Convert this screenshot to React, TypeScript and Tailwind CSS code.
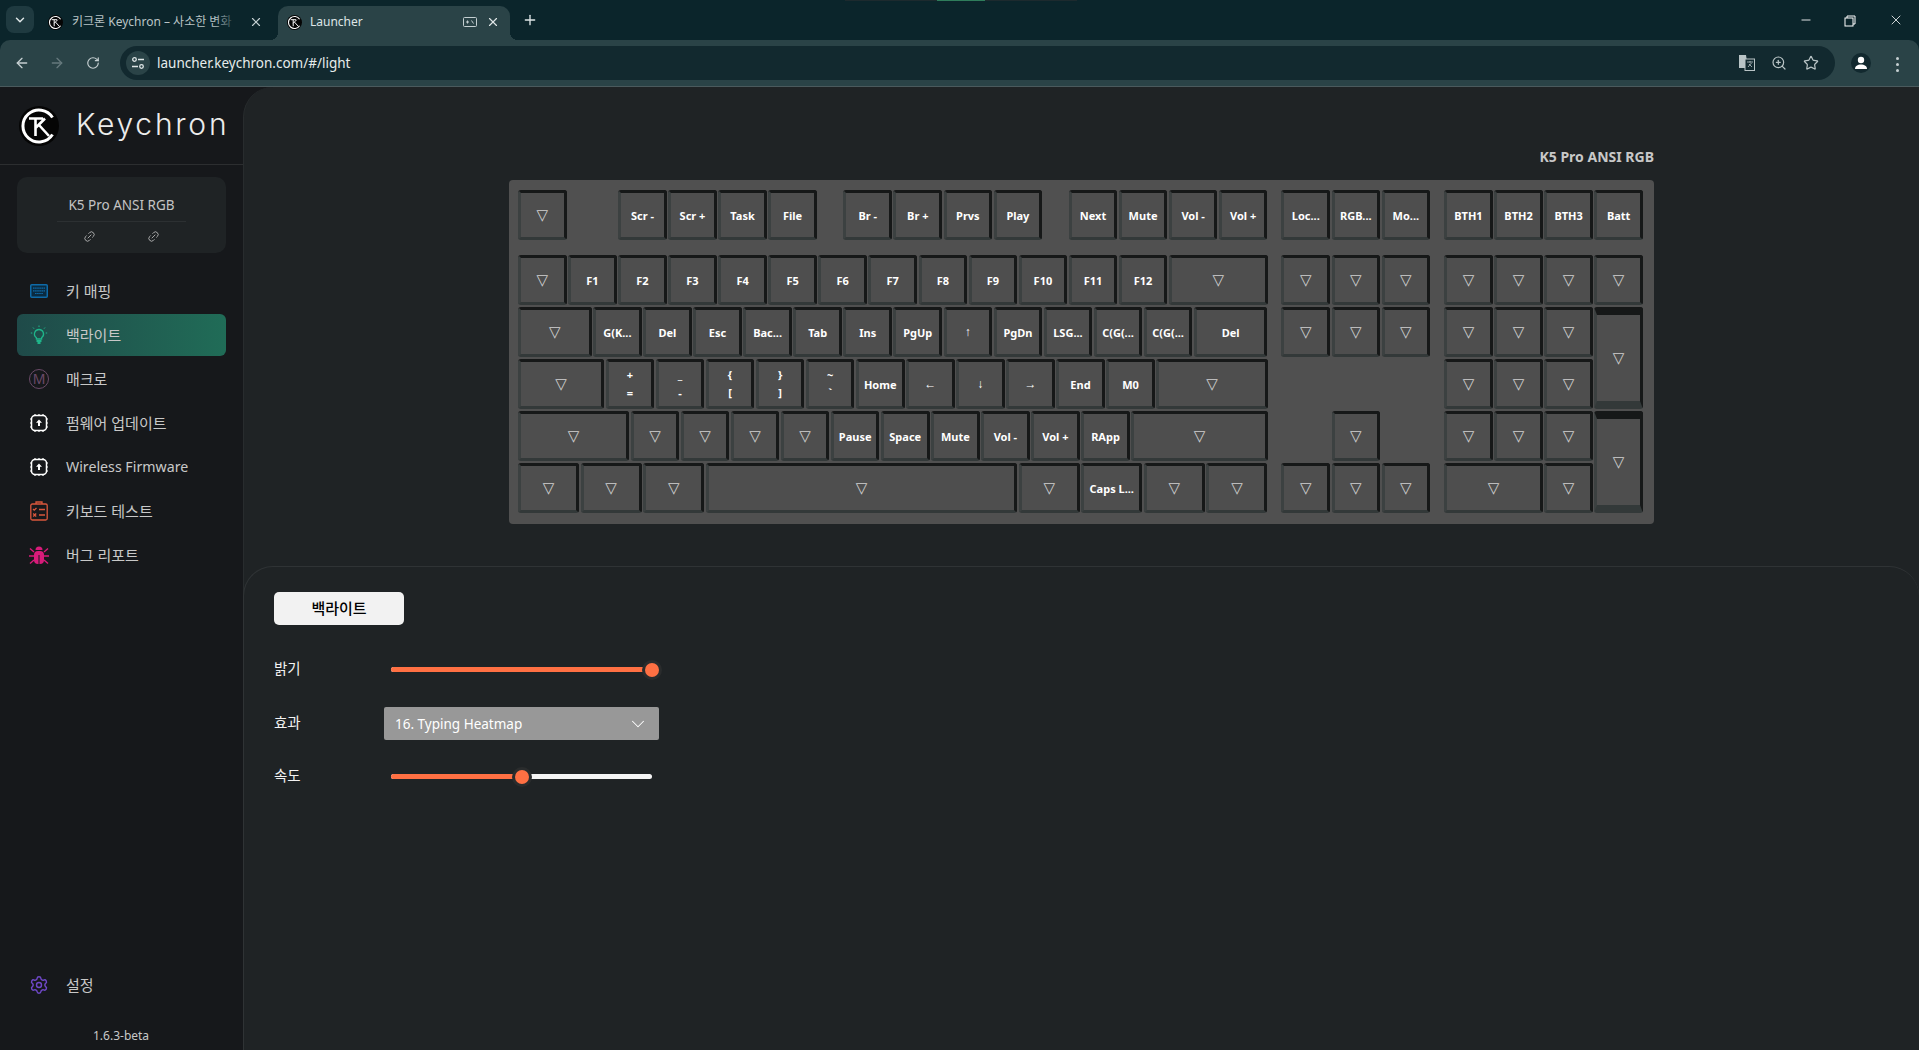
import { ArrowLeft, ArrowRight, ChevronDown, Link2, Minus, Plus, RotateCw, Settings, Star, X, ZoomIn } from 'lucide-react';

const UNIT = 50.1;
const FONT = { fontFamily: '"Noto Sans", "Noto Sans CJK KR", sans-serif' };

type KeyDef = { l?: string; l2?: string; x: number; w?: number; h?: number; r: number };

const tri = '▽';
const arrows = ['←', '↑', '→', '↓'];

function row(r: number, start: number, labels: string[]): KeyDef[] {
  return labels.map((l, i) => ({ l, x: start + i, r }));
}

const keys: KeyDef[] = [
  // function row
  { l: tri, x: 0, r: 1 },
  ...row(1, 2, ['Scr -', 'Scr +', 'Task', 'File']),
  ...row(1, 6.5, ['Br -', 'Br +', 'Prvs', 'Play']),
  ...row(1, 11, ['Next', 'Mute', 'Vol -', 'Vol +']),
  ...row(1, 15.25, ['Loc...', 'RGB...', 'Mo...']),
  ...row(1, 18.5, ['BTH1', 'BTH2', 'BTH3', 'Batt']),
  // number row
  ...row(2, 0, [tri, 'F1', 'F2', 'F3', 'F4', 'F5', 'F6', 'F7', 'F8', 'F9', 'F10', 'F11', 'F12']),
  { l: tri, x: 13, w: 2, r: 2 },
  ...row(2, 15.25, [tri, tri, tri]),
  ...row(2, 18.5, [tri, tri, tri, tri]),
  // tab row
  { l: tri, x: 0, w: 1.5, r: 3 },
  ...row(3, 1.5, ['G(K...', 'Del', 'Esc', 'Bac...', 'Tab', 'Ins', 'PgUp', '↑', 'PgDn', 'LSG...', 'C(G(...', 'C(G(...']),
  { l: 'Del', x: 13.5, w: 1.5, r: 3 },
  ...row(3, 15.25, [tri, tri, tri]),
  ...row(3, 18.5, [tri, tri, tri]),
  { l: tri, x: 21.5, h: 2, r: 3 },
  // caps row
  { l: tri, x: 0, w: 1.75, r: 4 },
  { l: '+', l2: '=', x: 1.75, r: 4 },
  { l: '_', l2: '-', x: 2.75, r: 4 },
  { l: '{', l2: '[', x: 3.75, r: 4 },
  { l: '}', l2: ']', x: 4.75, r: 4 },
  { l: '~', l2: '`', x: 5.75, r: 4 },
  ...row(4, 6.75, ['Home', '←', '↓', '→', 'End', 'M0']),
  { l: tri, x: 12.75, w: 2.25, r: 4 },
  ...row(4, 18.5, [tri, tri, tri]),
  // shift row
  { l: tri, x: 0, w: 2.25, r: 5 },
  ...row(5, 2.25, [tri, tri, tri, tri, 'Pause', 'Space', 'Mute', 'Vol -', 'Vol +', 'RApp']),
  { l: tri, x: 12.25, w: 2.75, r: 5 },
  { l: tri, x: 16.25, r: 5 },
  ...row(5, 18.5, [tri, tri, tri]),
  { l: tri, x: 21.5, h: 2, r: 5 },
  // bottom row
  { l: tri, x: 0, w: 1.25, r: 6 },
  { l: tri, x: 1.25, w: 1.25, r: 6 },
  { l: tri, x: 2.5, w: 1.25, r: 6 },
  { l: tri, x: 3.75, w: 6.25, r: 6 },
  { l: tri, x: 10, w: 1.25, r: 6 },
  { l: 'Caps L...', x: 11.25, w: 1.25, r: 6 },
  { l: tri, x: 12.5, w: 1.25, r: 6 },
  { l: tri, x: 13.75, w: 1.25, r: 6 },
  ...row(6, 15.25, [tri, tri, tri]),
  { l: tri, x: 18.5, w: 2, r: 6 },
  { l: tri, x: 20.5, r: 6 },
];

function Logo({ size }: { size: number }) {
  return (
    <svg width={size} height={size} viewBox="0 0 40 40" className="shrink-0">
      <circle cx="20" cy="20" r="20" fill="#050505" />
      <path d="M33.5 11.5A16 16 0 1 0 33.5 28.5" fill="none" stroke="#fff" strokeWidth="3" />
      <path d="M10 12.5H24M16.5 12.5V30M16.5 22L26 12.5M20 19L30 30" fill="none" stroke="#fff" strokeWidth="2.6" />
    </svg>
  );
}

function Key({ def }: { def: KeyDef }) {
  const w = def.w ?? 1;
  const tall = def.h === 2;
  const isTri = def.l === tri;
  const isArrow = arrows.includes(def.l ?? '');
  return (
    <div
      className={`flex flex-col items-center justify-center rounded-[3px] border-l-[3px] border-r-[3px] border-l-[#3c4141] border-r-[#161818] bg-[#4e4e4e] text-white ${
        tall
          ? 'h-[102px] border-t-[8px] border-b-[8px] border-t-[#161818] border-b-[#333939]'
          : 'h-[50px] border-t-[3px] border-b-[3px] border-t-[#161818] border-b-[#333939]'
      }`}
      style={{
        gridColumn: `${Math.round(def.x * 4) + 1} / span ${Math.round(w * 4)}`,
        gridRow: `${def.r} / span ${def.h ?? 1}`,
        width: w * UNIT - 1.5,
      }}
    >
      {isTri ? (
        <span className="text-[15px] leading-none text-[#d0d0d0] font-['DejaVu_Sans']">{tri}</span>
      ) : def.l2 ? (
        <>
          <span className="text-[11px] font-bold leading-[18px]">{def.l}</span>
          <span className="text-[11px] font-bold leading-[18px]">{def.l2}</span>
        </>
      ) : (
        <span className={`whitespace-nowrap font-bold leading-none ${isArrow ? "font-['Liberation_Sans'] text-[12px]" : 'text-[11px]'}`}>
          {def.l}
        </span>
      )}
    </div>
  );
}

function Keyboard() {
  return (
    <div className="w-[1145px] rounded-[4px] bg-[#505050] pl-[9px] pt-[10px] pb-[11px]">
      <div
        className="grid grid-rows-[65px_52px_52px_52px_52px_50px]"
        style={{ gridTemplateColumns: `repeat(90, ${UNIT / 4}px)` }}
      >
        {keys.map((k, i) => (
          <Key key={i} def={k} />
        ))}
      </div>
    </div>
  );
}

function ChipIcon() {
  return (
    <svg width="20" height="20" viewBox="0 0 20 20" fill="none" className="text-white">
      <rect x="2.5" y="2.5" width="15" height="15" rx="3.5" stroke="currentColor" strokeWidth="1.5" />
      <path
        d="M6 1v1M10 1v1M14 1v1M6 18v1M10 18v1M14 18v1M1 6h1M1 10h1M1 14h1M18 6h1M18 10h1M18 14h1"
        stroke="currentColor"
        strokeWidth="1.2"
      />
      <path d="M10 6.5l3 3.2h-2v3.3H9V9.700H7z" fill="currentColor" />
    </svg>
  );
}

const navItems = [
  {
    label: '키 매핑',
    icon: (
      <svg width="18" height="14" viewBox="0 0 18 14" fill="none" stroke="#0e6aa8">
        <rect x="0.75" y="0.75" width="16.5" height="12.5" rx="1" strokeWidth="1.500" fill="#0a2a40" />
        <path d="M3 4.200h12M3 6.800h12M5 9.500h8" strokeWidth="1.200" strokeDasharray="1.600 .5" />
      </svg>
    ),
  },
  {
    label: '백라이트',
    active: true,
    icon: (
      <svg width="18" height="20" viewBox="0 0 18 20" fill="none" stroke="#1fb58a" strokeWidth="1.300">
        <path d="M9 4.500a4.500 4.500 0 0 0-2.600 8.200V14h5.200v-1.300A4.500 4.500 0 0 0 9 4.500z" />
        <path d="M6.500 16h5M7.500 18h3" strokeWidth="1.800" />
        <path d="M9 .5v1.500M3 2.500l1 1.200M15 2.500l-1 1.200M.8 8h1.500M15.700 8h1.500" strokeWidth="1" />
      </svg>
    ),
  },
  {
    label: '매크로',
    icon: (
      <span className="flex h-5 w-5 items-center justify-center rounded-full border border-[#6a4a68] text-[14px] leading-none text-[#6a4a68]">
        M
      </span>
    ),
  },
  { label: '펌웨어 업데이트', icon: <ChipIcon /> },
  { label: 'Wireless Firmware', latin: true, icon: <ChipIcon /> },
  {
    label: '키보드 테스트',
    icon: (
      <svg width="18" height="20" viewBox="0 0 18 20" fill="none" stroke="#d9573d" strokeWidth="1.300">
        <rect x="0.8" y="3" width="16.400" height="16" rx="1.500" />
        <path d="M6 3V1h6v2" />
        <path d="M3 8l1.200 1.200L6.500 7M3.200 12.500l3 3M6.200 12.500l-3 3M9 8.500h6M9 14h6" />
      </svg>
    ),
  },
  {
    label: '버그 리포트',
    icon: (
      <svg width="20" height="20" viewBox="0 0 20 20" fill="#d81b7a">
        <path d="M6.500 5a3.500 3.500 0 0 1 7 0z" />
        <rect x="5" y="6" width="10" height="13" rx="4" />
        <path d="M1 3.500l4 3.500M19 3.500l-4 3.500M0 11h5M20 11h-5M1 18.500l4-3.500M19 18.500l-4-3.500" stroke="#d81b7a" strokeWidth="1.400" />
        <path d="M10 10v9" stroke="#16181b" strokeWidth="1" />
      </svg>
    ),
  },
];

function Sidebar() {
  return (
    <aside className="flex h-full w-[243px] shrink-0 flex-col bg-[#16181b]">
      <div className="flex h-[78px] items-center gap-[17px] border-b border-[#2c2e30] pl-[19px]">
        <Logo size={40} />
        <span className="font-['Inter'] text-[30px] font-light leading-none tracking-[2.750px] text-[#ececec] -mt-[4px]">
          Keychron
        </span>
      </div>
      <div className="mx-[17px] mt-[12px] flex h-[76px] flex-col items-center rounded-[10px] bg-[#1f2325]">
        <div className="flex h-[45px] w-[129px] items-center justify-center border-b border-[#2c3032] pt-[13px] text-[13.500px] text-[#c4c4c4]">
          K5 Pro ANSI RGB
        </div>
        <div className="mt-[8px] flex gap-[51px] text-[#c8c8c8]">
          <Link2 size={13} strokeWidth={1.400} className="-rotate-45" />
          <Link2 size={13} strokeWidth={1.400} className="-rotate-45" />
        </div>
      </div>
      <nav className="mx-[17px] mt-[16px] flex flex-col">
        {navItems.map((item) => (
          <div
            key={item.label}
            className={`flex h-[44px] items-center ${item.active ? 'relative' : ''}`}
          >
            {item.active && (
              <div className="absolute inset-x-0 top-[1px] h-[42px] rounded-[6px] bg-gradient-to-r from-[#1f4a49] to-[#206c57]" />
            )}
            <span className="relative mr-[5px] flex w-[44px] justify-center">{item.icon}</span>
            <span className={`relative text-[#c8c8c8] ${item.latin ? 'text-[14.200px]' : 'text-[15px]'}`}>{item.label}</span>
          </div>
        ))}
      </nav>
      <div className="mx-[17px] mt-auto flex h-[44px] items-center">
        <span className="mr-[5px] flex w-[44px] justify-center">
          <Settings size={20} strokeWidth={1.700} className="text-[#6f48c9]" />
        </span>
        <span className="text-[15px] text-[#c8c8c8]">설정</span>
      </div>
      <div className="mt-[21px] mb-[6px] pl-[93px] text-[12px] leading-[16px] text-[#c8c8c8]">1.6.3-beta</div>
    </aside>
  );
}

function Slider({ value }: { value: number }) {
  return (
    <div className="relative ml-[7px] h-[5px] w-[261px] rounded-full bg-[#f5f5f5]">
      <div className="h-full rounded-full bg-[#ff7043]" style={{ width: `${value}%` }} />
      <div
        className="absolute top-1/2 h-[14px] w-[14px] -translate-x-1/2 -translate-y-1/2 rounded-full bg-[#ff7043] shadow-[0_0_0_3px_#2a2c2d]"
        style={{ left: `${value}%` }}
      />
    </div>
  );
}

function SettingRow({ label, children, className }: { label: string; children: React.ReactNode; className?: string }) {
  return (
    <div className={`flex h-[33px] items-center ${className ?? ''}`}>
      <span className="-mt-[2px] w-[110px] text-[14.500px] text-[#f2f2f2]">{label}</span>
      {children}
    </div>
  );
}

function Main() {
  return (
    <main className="flex h-full flex-1 flex-col rounded-tl-[30px] border-l border-[#282c2e] bg-[#1f2325]">
      <div className="h-[479px] pl-[265px] pt-[61px]">
        <div className="w-[1145px] text-right text-[14px] font-bold leading-[18px] text-[#c8c8c8]">
          K5 Pro ANSI RGB
        </div>
        <div className="mt-[14px]">
          <Keyboard />
        </div>
      </div>
      <section className="-ml-px flex flex-1 flex-col rounded-tl-[30px] rounded-tr-[30px] border-l border-t border-[#2f3335] pl-[30px] pt-[25px]">
        <button className="h-[33px] w-[130px] rounded-[5px] bg-[#f2f2f2] text-[15px] font-medium text-black">
          백라이트
        </button>
        <div className="mt-[28px] flex flex-col gap-[21px]">
          <SettingRow label="밝기">
            <Slider value={100} />
          </SettingRow>
          <SettingRow label="효과">
            <div className="flex h-[33px] w-[275px] items-center justify-between rounded-[2px] bg-[#989898] pl-[11px] pr-[10px] pt-[1px] text-[13.500px] text-white">
              <span>16. Typing Heatmap</span>
              <ChevronDown size={22} strokeWidth={1.100} />
            </div>
          </SettingRow>
          <SettingRow label="속도" className="-mt-px">
            <Slider value={50} />
          </SettingRow>
        </div>
      </section>
    </main>
  );
}

function BrowserChrome() {
  return (
    <header className="shrink-0 bg-[#0b252b] text-[#dfe6e7]">
      <div className="relative flex h-[40px] items-start">
        <div className="absolute left-[845px] top-0 h-[1px] w-[232px] bg-[#1d2a2e]" />
        <div className="absolute left-[937px] top-0 h-[1px] w-[48px] bg-[#2f7d5b]" />
        <div className="ml-[6px] mt-[6px] flex h-[27px] w-[28px] items-center justify-center rounded-[8px] bg-[#1f3a40]">
          <ChevronDown size={14} strokeWidth={2.500} />
        </div>
        <div className="ml-[14px] mt-[6px] flex h-[34px] w-[230px] items-center pb-[2px]">
          <Logo size={15} />
          <div className="relative ml-[9px] w-[166px] overflow-hidden whitespace-nowrap text-[12px] text-[#b9c4c6]">
            키크론 Keychron – 사소한 변화
            <div className="absolute inset-y-0 right-0 w-[24px] bg-gradient-to-r from-transparent to-[#0b252b]" />
          </div>
          <X size={14} strokeWidth={2} className="ml-[11px] text-[#c4cfd1]" />
        </div>
        <div className="relative ml-0 mt-[6px] flex h-[34px] w-[232px] items-center rounded-t-[10px] bg-[#2a4347] pb-[2px] pl-[9px] before:absolute before:bottom-0 before:-left-[8px] before:h-[8px] before:w-[8px] before:bg-[radial-gradient(circle_at_0_0,transparent_8px,#2a4347_8px)] after:absolute after:bottom-0 after:-right-[8px] after:h-[8px] after:w-[8px] after:bg-[radial-gradient(circle_at_100%_0,transparent_8px,#2a4347_8px)]">
          <Logo size={15} />
          <span className="ml-[8px] w-[153px] text-[12px]">Launcher</span>
          <svg width="14" height="10" viewBox="0 0 14 10" fill="none" stroke="#c4cfd1" strokeWidth="1">
            <rect x="0.500" y="0.500" width="13" height="9" rx="1" />
            <path d="M3 5h3M4.500 3.500v3M8.500 3.500l2 3" />
          </svg>
          <X size={14} strokeWidth={2} className="ml-[9px] text-[#dfe6e7]" />
        </div>
        <Plus size={16} strokeWidth={2} className="ml-[12px] mt-[12px]" />
        <div className="ml-auto flex items-center">
          <Minus size={14} strokeWidth={1.500} className="mr-[31px] mt-[12px] text-white" />
          <svg width="12" height="12" viewBox="0 0 12 12" fill="none" stroke="#fff" className="mr-[32px] mt-[14px]">
            <path d="M3 3V1h8v8H9" />
            <rect x="1" y="3" width="8" height="8" />
          </svg>
          <X size={16} strokeWidth={1.200} className="mr-[15px] mt-[12px] text-white" />
        </div>
      </div>
      <div className="flex h-[47px] items-start rounded-t-[10px] border-b border-[#4a5a5d] bg-[#2a4347]">
        <ArrowLeft size={16} strokeWidth={2} className="ml-[14px] mt-[15px] text-[#c6d0d2]" />
        <ArrowRight size={16} strokeWidth={2} className="ml-[19px] mt-[15px] text-[#66797d]" />
        <RotateCw size={14} strokeWidth={2} className="ml-[21px] mt-[16px] text-[#c6d0d2]" />
        <div className="ml-[20px] mt-[6px] flex h-[34px] flex-1 items-center rounded-full bg-[#12292f] pl-[6px]">
          <div className="flex h-[24px] w-[24px] items-center justify-center rounded-full bg-[#2a4347]">
            <svg width="14" height="14" viewBox="0 0 14 14" fill="none" stroke="#dfe6e7" strokeWidth="1.300">
              <circle cx="3.500" cy="3.500" r="1.800" />
              <circle cx="10.500" cy="10.500" r="1.800" />
              <path d="M7 3.500h6M1 10.500h6" />
            </svg>
          </div>
          <span className="ml-[7px] text-[13.500px] text-[#e6ecec]">launcher.keychron.com/#/light</span>
          <div className="ml-auto flex items-center">
            <svg width="16" height="16" viewBox="0 0 16 16" className="mr-[16px]">
              <path d="M0 0h7l2 13H0z" fill="#b9c4c6" />
              <rect x="6" y="4" width="9.500" height="11.500" fill="#12292f" stroke="#b9c4c6" />
              <path d="M8 7h6M11 6v1.500M9 12l3.500-4M10 9l3 3" stroke="#b9c4c6" strokeWidth=".8" />
            </svg>
            <ZoomIn size={16} strokeWidth={1.800} className="mr-[16px] text-[#b9c4c6]" />
            <Star size={16} strokeWidth={1.800} className="mr-[16px] text-[#b9c4c6]" />
          </div>
        </div>
        <div className="ml-[16px] mt-[13px] flex h-[20px] w-[20px] items-center justify-center overflow-hidden rounded-full bg-[#12292f]">
          <svg width="14" height="14" viewBox="0 0 14 14" fill="#fff">
            <circle cx="7" cy="4" r="3.200" />
            <path d="M1 13c0-3 2.500-4.500 6-4.500s6 1.500 6 4.500z" />
          </svg>
        </div>
        <div className="ml-[25px] mt-[17px] flex flex-col gap-[3px]">
          <span className="h-[3px] w-[3px] rounded-full bg-[#c6d0d2]" />
          <span className="h-[3px] w-[3px] rounded-full bg-[#c6d0d2]" />
          <span className="h-[3px] w-[3px] rounded-full bg-[#c6d0d2]" />
        </div>
        <div className="w-[20px]" />
      </div>
    </header>
  );
}

export default function App() {
  return (
    <div className="flex h-screen w-full flex-col overflow-hidden bg-[#16181b]" style={FONT}>
      <BrowserChrome />
      <div className="flex min-h-0 flex-1">
        <Sidebar />
        <Main />
      </div>
    </div>
  );
}
